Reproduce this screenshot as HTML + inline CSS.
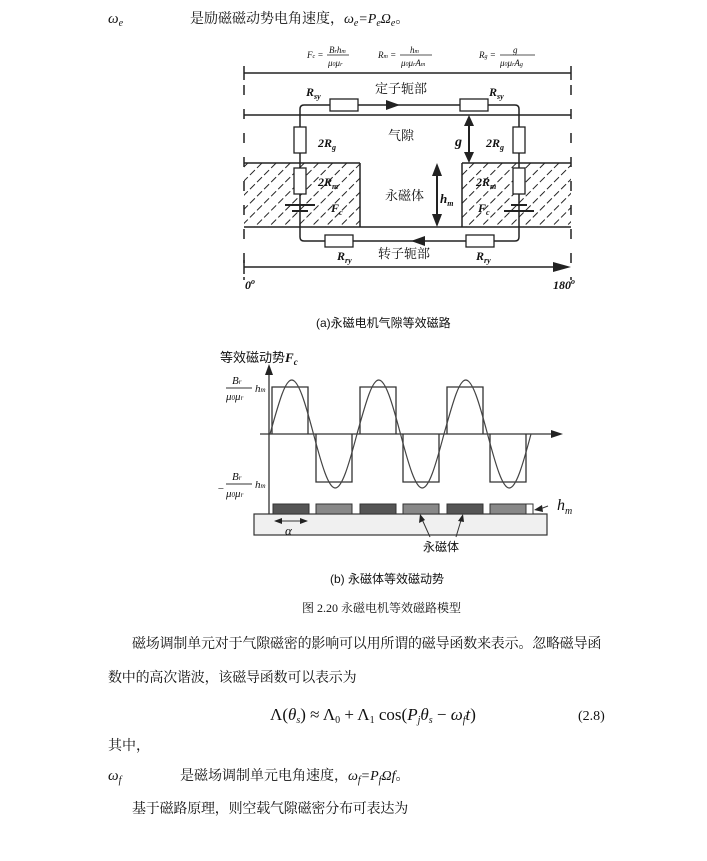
<!DOCTYPE html>
<html><head><meta charset="utf-8"><style>
html,body{margin:0;padding:0;background:#fff;}
svg{display:block;}
text{font-family:"Liberation Serif","Noto Serif CJK SC",serif;fill:#111;}
.s{font-family:"Liberation Sans","Noto Sans CJK SC",sans-serif;}
</style></head><body>
<svg width="707" height="861" viewBox="0 0 707 861" xmlns="http://www.w3.org/2000/svg">
<defs>
<pattern id="h" width="10" height="10" patternUnits="userSpaceOnUse" patternTransform="rotate(45)">
<line x1="0" y1="0" x2="0" y2="10" stroke="#222" stroke-width="2" stroke-dasharray="7 3"/>
</pattern>
</defs>
<text x="108" y="23" font-size="15" font-style="italic">ω<tspan font-size="10" dy="3">e</tspan></text>
<text x="190" y="23" font-size="14">是励磁磁动势电角速度，<tspan font-style="italic">ω<tspan font-size="10" dy="3">e</tspan><tspan dy="-3">=P</tspan><tspan font-size="10" dy="3">e</tspan><tspan dy="-3">Ω</tspan><tspan font-size="10" dy="3">e</tspan></tspan><tspan dy="-3">。</tspan></text>

<g stroke="#222" fill="none" stroke-width="1.5">
<rect x="244" y="163" width="116" height="64" fill="url(#h)" stroke="none"/>
<rect x="462" y="163" width="109" height="64" fill="url(#h)" stroke="none"/>
<line x1="244" y1="73" x2="571" y2="73"/>
<line x1="244" y1="66" x2="244" y2="80"/><line x1="571" y1="66" x2="571" y2="80"/>
<line x1="244" y1="85" x2="244" y2="280" stroke-dasharray="10 14"/>
<line x1="571" y1="85" x2="571" y2="280" stroke-dasharray="10 14"/>
<line x1="244" y1="115" x2="571" y2="115"/>
<line x1="244" y1="163" x2="360" y2="163"/><line x1="360" y1="163" x2="360" y2="227"/>
<line x1="462" y1="163" x2="571" y2="163"/><line x1="462" y1="163" x2="462" y2="227"/>
<line x1="244" y1="227" x2="571" y2="227"/>
<line x1="244" y1="267" x2="560" y2="267"/><line x1="244" y1="260" x2="244" y2="274"/>
<path d="M300 150 V109 q0-4 4-4 H515 q4 0 4 4 V237 q0 4-4 4 H304 q-4 0-4-4 V205"/>
<line x1="300" y1="150" x2="300" y2="210"/>
</g>
<polygon points="571,267 553,262 553,272" fill="#222"/>
<polygon points="400,105 386,100 386,110" fill="#222"/>
<polygon points="411,241 425,236 425,246" fill="#222"/>
<g fill="#fff" stroke="#222" stroke-width="1.3">
<rect x="330" y="99" width="28" height="12"/><rect x="460" y="99" width="28" height="12"/>
<rect x="325" y="235" width="28" height="12"/><rect x="466" y="235" width="28" height="12"/>
<rect x="294" y="127" width="12" height="26"/><rect x="513" y="127" width="12" height="26"/>
<rect x="294" y="168" width="12" height="26"/><rect x="513" y="168" width="12" height="26"/>
</g>
<g stroke="#222" stroke-width="2">
<line x1="285" y1="205" x2="315" y2="205"/><line x1="292" y1="211" x2="308" y2="211"/>
<line x1="511" y1="205" x2="527" y2="205"/><line x1="504" y1="211" x2="534" y2="211"/>
<line x1="469" y1="122" x2="469" y2="156"/><line x1="437" y1="170" x2="437" y2="220"/>
</g>
<g fill="#222">
<polygon points="469,115 464,126 474,126"/><polygon points="469,163 464,152 474,152"/>
<polygon points="437,163 432,176 442,176"/><polygon points="437,227 432,214 442,214"/>
</g>
<g font-size="9" font-style="italic" fill="#555">
<text x="307" y="58">F<tspan font-size="6">c</tspan> = </text><text x="329" y="53">B<tspan font-size="6">r</tspan>h<tspan font-size="6">m</tspan></text><line x1="327" y1="55" x2="349" y2="55" stroke="#555"/><text x="328" y="66">μ<tspan font-size="6">0</tspan>μ<tspan font-size="6">r</tspan></text>
<text x="378" y="58">R<tspan font-size="6">m</tspan> = </text><text x="410" y="53">h<tspan font-size="6">m</tspan></text><line x1="400" y1="55" x2="432" y2="55" stroke="#555"/><text x="401" y="66">μ<tspan font-size="6">0</tspan>μ<tspan font-size="6">r</tspan>A<tspan font-size="6">m</tspan></text>
<text x="479" y="58">R<tspan font-size="6">g</tspan> = </text><text x="513" y="53">g</text><line x1="500" y1="55" x2="535" y2="55" stroke="#555"/><text x="500" y="66">μ<tspan font-size="6">0</tspan>μ<tspan font-size="6">r</tspan>A<tspan font-size="6">g</tspan></text>
</g>
<g font-size="12" font-weight="bold" font-style="italic">
<text x="306" y="96">R<tspan font-size="8" dy="3">sy</tspan></text>
<text x="489" y="96">R<tspan font-size="8" dy="3">sy</tspan></text>
<text x="318" y="147">2R<tspan font-size="8" dy="3">g</tspan></text>
<text x="486" y="147">2R<tspan font-size="8" dy="3">g</tspan></text>
<text x="455" y="146" font-size="14">g</text>
<text x="318" y="186">2R<tspan font-size="8" dy="3">m</tspan></text>
<text x="476" y="186">2R<tspan font-size="8" dy="3">m</tspan></text>
<text x="331" y="212">F<tspan font-size="8" dy="3">c</tspan></text>
<text x="478" y="212">F<tspan font-size="8" dy="3">c</tspan></text>
<text x="440" y="203" font-size="13">h<tspan font-size="8" dy="3">m</tspan></text>
<text x="337" y="260">R<tspan font-size="8" dy="3">ry</tspan></text>
<text x="476" y="260">R<tspan font-size="8" dy="3">ry</tspan></text>
<text x="245" y="289">0<tspan font-size="8" dy="-5">o</tspan></text>
<text x="553" y="289">180<tspan font-size="8" dy="-5">o</tspan></text>
</g>
<g font-size="13" class="s">
<text x="375" y="93">定子轭部</text>
<text x="388" y="140">气隙</text>
<text x="385" y="200">永磁体</text>
<text x="378" y="258">转子轭部</text>
</g>
<text x="316" y="327" font-size="12" class="s">(a)永磁电机气隙等效磁路</text>

<text x="220" y="362" font-size="13" class="s">等效磁动势<tspan font-family="Liberation Serif" font-style="italic" font-weight="bold">F<tspan font-size="9" dy="3">c</tspan></tspan></text>
<g stroke="#333" fill="none" stroke-width="1.3">
<line x1="269" y1="372" x2="269" y2="515"/>
<line x1="260" y1="434" x2="555" y2="434"/>
<path d="M272 434 V387 H308 V434 M316 434 V482 H352 V434 M360 434 V387 H396 V434 M403 434 V482 H439 V434 M447 434 V387 H483 V434 M490 434 V482 H526 V434"/>
</g>
<path stroke="#444" fill="none" stroke-width="1.2" d="M270,434 C279,402 285,380 291.75,380 C298.5,380 305,402 313.5,434 C322,466 328.5,488 335.25,488 C342,488 348.5,466 357,434 C366,402 372,380 378.75,380 C385.5,380 392,402 400.5,434 C409,466 415.5,488 422.25,488 C429,488 435.5,466 444,434 C453,402 459,380 465.75,380 C472.5,380 479,402 487.5,434 C496,466 502.5,488 509.25,488 C516,488 522.5,466 531,434"/>
<polygon points="269,364 265,375 273,375" fill="#222"/>
<polygon points="563,434 551,430 551,438" fill="#222"/>
<g font-size="11" font-style="italic" fill="#333">
<text x="232" y="384">B<tspan font-size="7">r</tspan></text><line x1="226" y1="388" x2="252" y2="388" stroke="#333"/><text x="226" y="400">μ<tspan font-size="7">0</tspan>μ<tspan font-size="7">r</tspan></text><text x="255" y="392">h<tspan font-size="7">m</tspan></text>
<text x="217" y="492">−</text><text x="232" y="480">B<tspan font-size="7">r</tspan></text><line x1="226" y1="484" x2="252" y2="484" stroke="#333"/><text x="226" y="497">μ<tspan font-size="7">0</tspan>μ<tspan font-size="7">r</tspan></text><text x="255" y="488">h<tspan font-size="7">m</tspan></text>
</g>
<rect x="254" y="514" width="293" height="21" fill="#f0f0f0" stroke="#333" stroke-width="1.2"/>
<g stroke="#333" stroke-width="1">
<rect x="273" y="504" width="36" height="10" fill="#555"/>
<rect x="316" y="504" width="36" height="10" fill="#888"/>
<rect x="360" y="504" width="36" height="10" fill="#555"/>
<rect x="403" y="504" width="36" height="10" fill="#888"/>
<rect x="447" y="504" width="36" height="10" fill="#555"/>
<rect x="490" y="504" width="36" height="10" fill="#888"/>
<rect x="526" y="504" width="7" height="10" fill="#fff"/>
<line x1="275" y1="521" x2="307" y2="521"/>
<line x1="430" y1="537" x2="421" y2="517"/><line x1="456" y1="537" x2="462" y2="517"/>
<line x1="540" y1="509" x2="548" y2="506"/>
</g>
<polygon points="274,521 282,518 282,524" fill="#222"/><polygon points="308,521 300,518 300,524" fill="#222"/>
<polygon points="420,514 419,523 425,520" fill="#222"/><polygon points="463,514 458,521 464,522" fill="#222"/>
<polygon points="534,510 542,505 543,512" fill="#222"/>
<text x="285" y="535" font-size="13" font-style="italic">α</text>
<text x="557" y="510" font-size="16" font-style="italic">h<tspan font-size="10" dy="4">m</tspan></text>
<text x="423" y="551" font-size="12" class="s">永磁体</text>
<text x="330" y="583" font-size="12" class="s">(b) 永磁体等效磁动势</text>
<text x="302" y="612" font-size="12">图 2.20 永磁电机等效磁路模型</text>

<text x="132" y="648" font-size="14" letter-spacing="-0.2">磁场调制单元对于气隙磁密的影响可以用所谓的磁导函数来表示。忽略磁导函</text>
<text x="108" y="682" font-size="14" letter-spacing="-0.2">数中的高次谐波，该磁导函数可以表示为</text>
<text x="270" y="720" font-size="17">Λ(<tspan font-style="italic">θ</tspan><tspan font-size="10" dy="3" font-style="italic">s</tspan><tspan dy="-3">) ≈ Λ</tspan><tspan font-size="10" dy="3">0</tspan><tspan dy="-3"> + Λ</tspan><tspan font-size="10" dy="3">1</tspan><tspan dy="-3"> cos(</tspan><tspan font-style="italic">P</tspan><tspan font-size="10" dy="3" font-style="italic">j</tspan><tspan dy="-3" font-style="italic">θ</tspan><tspan font-size="10" dy="3" font-style="italic">s</tspan><tspan dy="-3"> − </tspan><tspan font-style="italic">ω</tspan><tspan font-size="10" dy="3" font-style="italic">f</tspan><tspan dy="-3" font-style="italic">t</tspan>)</text>
<text x="578" y="720" font-size="14">(2.8)</text>
<text x="108" y="750" font-size="14">其中，</text>
<text x="108" y="780" font-size="15" font-style="italic">ω<tspan font-size="10" dy="3">f</tspan></text>
<text x="180" y="780" font-size="14">是磁场调制单元电角速度，<tspan font-style="italic">ω<tspan font-size="10" dy="3">f</tspan><tspan dy="-3">=P</tspan><tspan font-size="10" dy="3">f</tspan><tspan dy="-3">Ωf</tspan></tspan>。</text>
<text x="132" y="813" font-size="14" letter-spacing="-0.2">基于磁路原理，则空载气隙磁密分布可表达为</text>
</svg>
</body></html>
